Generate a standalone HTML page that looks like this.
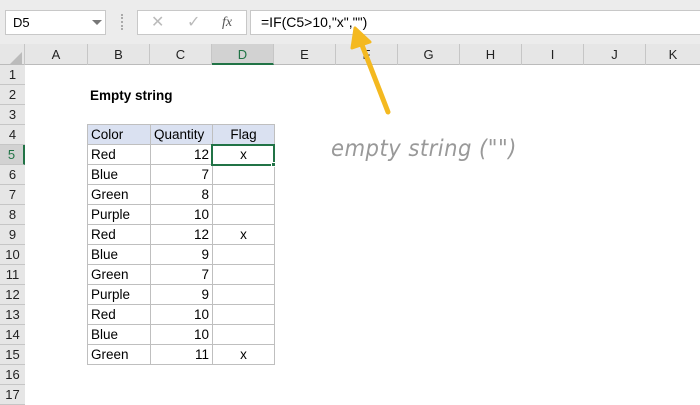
<!DOCTYPE html><html><head><style>
body{margin:0;width:700px;height:400px;overflow:hidden;background:#fff;font-family:"Liberation Sans",Calibri,sans-serif;font-size:13px;position:relative}
div{position:absolute;box-sizing:border-box}
.ch{top:44px;height:21px;border-right:1px solid #c6c6c6;text-align:center;line-height:21px;color:#222}
.rh{left:0;width:25px;height:20px;border-bottom:1px solid #c6c6c6;text-align:center;line-height:20px;color:#222;background:#e6e6e6}
.c{height:21px;border:1px solid #bfbfbf;line-height:19px;padding:0 3px;font-size:13.5px}
</style></head><body>
<div style="left:0;top:0;width:700px;height:44px;background:#ececec"></div>
<div style="left:5px;top:10px;width:101px;height:25px;background:#fff;border:1px solid #c8c8c8;line-height:23px;padding-left:7px;font-size:13px">D5</div>
<div style="left:92px;top:20px;width:0;height:0;border-left:5px solid transparent;border-right:5px solid transparent;border-top:5px solid #777"></div>
<div style="left:121px;top:14px;width:2px;height:16px;border-left:2px dotted #aaa"></div>
<div style="left:137px;top:10px;width:110px;height:25px;background:#fff;border:1px solid #c8c8c8"></div>
<div style="left:151px;top:10px;color:#bbb;font-size:16px;line-height:25px">✕</div>
<div style="left:187px;top:10px;color:#bbb;font-size:16px;line-height:25px">✓</div>
<div style="left:222px;top:10px;color:#555;font-size:14px;line-height:25px;font-style:italic;font-family:'Liberation Serif',serif">fx</div>
<div style="left:250px;top:10px;width:450px;height:25px;background:#fff;border:1px solid #c8c8c8;border-right:none;line-height:23px;padding-left:10px;font-size:14px">=IF(C5&gt;10,"x","")</div>
<div style="left:0;top:44px;width:700px;height:21px;background:#e6e6e6;border-bottom:1px solid #bbb"></div>
<div style="left:0;top:44px;width:25px;height:21px;border-right:1px solid #c6c6c6"></div>
<div style="left:10px;top:52px;width:0;height:0;border-left:12px solid transparent;border-bottom:12px solid #bbb"></div>
<div class="ch" style="left:25px;width:63px">A</div>
<div class="ch" style="left:88px;width:62px">B</div>
<div class="ch" style="left:150px;width:62px">C</div>
<div class="ch" style="left:212px;width:62px;background:#d2d2d2;border-bottom:2px solid #217346;color:#217346">D</div>
<div class="ch" style="left:274px;width:62px">E</div>
<div class="ch" style="left:336px;width:62px">F</div>
<div class="ch" style="left:398px;width:62px">G</div>
<div class="ch" style="left:460px;width:62px">H</div>
<div class="ch" style="left:522px;width:62px">I</div>
<div class="ch" style="left:584px;width:62px">J</div>
<div class="ch" style="left:646px;width:54px;border:none">K</div>
<div style="left:0;top:65px;width:25px;height:335px;background:#e6e6e6;border-right:1px solid #bbb"></div>
<div class="rh" style="top:65px">1</div><div class="rh" style="top:85px">2</div><div class="rh" style="top:105px">3</div><div class="rh" style="top:125px">4</div>
<div class="rh" style="top:145px;background:#d2d2d2;color:#217346;border-right:2px solid #217346">5</div>
<div class="rh" style="top:165px">6</div><div class="rh" style="top:185px">7</div><div class="rh" style="top:205px">8</div><div class="rh" style="top:225px">9</div><div class="rh" style="top:245px">10</div><div class="rh" style="top:265px">11</div><div class="rh" style="top:285px">12</div><div class="rh" style="top:305px">13</div><div class="rh" style="top:325px">14</div><div class="rh" style="top:345px">15</div><div class="rh" style="top:365px">16</div><div class="rh" style="top:385px">17</div>
<div style="left:90px;top:86px;font-weight:bold;font-size:13.5px;line-height:20px">Empty string</div>
<div class="c" style="left:87px;top:124px;width:64px;background:#dae1f1">Color</div>
<div class="c" style="left:150px;top:124px;width:63px;background:#dae1f1">Quantity</div>
<div class="c" style="left:212px;top:124px;width:63px;background:#dae1f1;text-align:center">Flag</div>
<div id="t"></div>
<script>
var d=[["Red",12,"x"],["Blue",7,""],["Green",8,""],["Purple",10,""],["Red",12,"x"],["Blue",9,""],["Green",7,""],["Purple",9,""],["Red",10,""],["Blue",10,""],["Green",11,"x"]];
var h="";d.forEach(function(r,i){var y=144+i*20;
h+='<div class="c" style="left:87px;top:'+y+'px;width:64px">'+r[0]+'</div><div class="c" style="left:150px;top:'+y+'px;width:63px;text-align:right">'+r[1]+'</div><div class="c" style="left:212px;top:'+y+'px;width:63px;text-align:center">'+r[2]+'</div>';});
document.getElementById("t").outerHTML=h;
</script>
<div style="left:211px;top:144px;width:64px;height:22px;border:2px solid #217346"></div>
<div style="left:271px;top:162px;width:5px;height:5px;background:#217346;border:1px solid #fff"></div>
<svg style="position:absolute;left:0;top:0" width="700" height="400"><line x1="388" y1="112" x2="362" y2="45" stroke="#f4b920" stroke-width="5" stroke-linecap="round"/><polygon points="355,28 352,48 370,42" fill="#f4b920" stroke="#f4b920" stroke-width="3" stroke-linejoin="round"/></svg>
<div style="left:331px;top:136px;font-size:23px;color:#999;font-style:italic;font-family:'DejaVu Sans',sans-serif;font-weight:200;letter-spacing:0.5px;transform:scaleX(0.92);transform-origin:left">empty string ("")</div>
</body></html>
